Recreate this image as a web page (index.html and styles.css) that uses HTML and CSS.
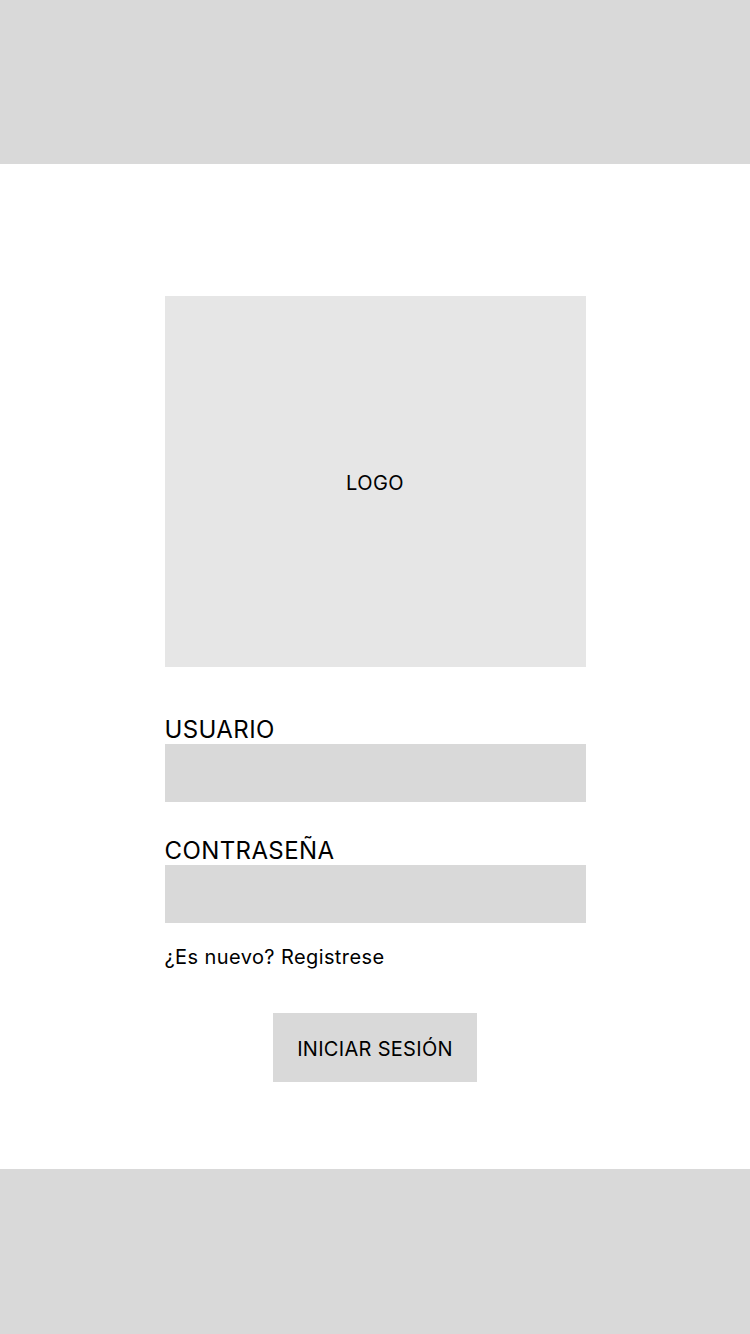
FILE: index.html
```html
<!DOCTYPE html>
<html lang="es">
<head>
  <meta charset="UTF-8">
  <meta name="viewport" content="width=device-width, initial-scale=1.0">
  <title>Iniciar sesión</title>
  <link rel="stylesheet" href="styles.css">
</head>
<body>
  <header class="top-bar"></header>

  <main class="login">
    <div class="logo-box">LOGO</div>

    <form class="login-form">
      <label class="field-label" for="usuario">USUARIO</label>
      <input class="field-input" type="text" id="usuario">

      <label class="field-label field-label--second" for="clave">CONTRASEÑA</label>
      <input class="field-input" type="password" id="clave">

      <p class="register">¿Es nuevo? Registrese</p>

      <button class="login-btn" type="button">INICIAR SESIÓN</button>
    </form>
  </main>

  <footer class="bottom-bar"></footer>
</body>
</html>
```

FILE: styles.css
```css
/* General */
body {
  margin: 0;
  padding: 0;
  height: 1334px;
  display: flex;
  flex-direction: column;
  background: #ffffff;
  color: #000;
  font-family: 'Inter', 'Liberation Sans', sans-serif;
}

/* Bars */
.top-bar {
  height: 164px;
  background: #d9d9d9;
}

.bottom-bar {
  height: 165px;
  background: #d9d9d9;
}

/* Login area */
.login {
  flex: 1;
  display: flex;
  flex-direction: column;
  align-items: center;
  padding-top: 132px;
}

.logo-box {
  width: 421px;
  height: 371px;
  background: #e6e6e6;
  display: flex;
  justify-content: center;
  align-items: center;
  font-size: 20px;
  letter-spacing: 0.4px;
  padding-top: 2px;
  box-sizing: border-box;
}

.login-form {
  width: 421px;
  display: flex;
  flex-direction: column;
  margin-top: 48px;
}

.field-label {
  font-size: 24px;
  line-height: 29px;
  height: 29px;
  letter-spacing: 0.4px;
}

.field-label--second {
  margin-top: 34px;
}

.field-input {
  height: 58px;
  border: none;
  background: #d9d9d9;
  padding: 0 12px;
  font-size: 20px;
  outline: none;
}

.register {
  margin: 22px 0 0;
  font-size: 20px;
  line-height: 24px;
  letter-spacing: 0.4px;
}

.login-btn {
  align-self: center;
  margin-top: 44px;
  width: 204px;
  height: 69px;
  border: none;
  background: #d9d9d9;
  font-family: inherit;
  font-size: 20px;
  letter-spacing: 0.3px;
  color: #000;
  padding: 2px 0 0;
  cursor: pointer;
}
```
